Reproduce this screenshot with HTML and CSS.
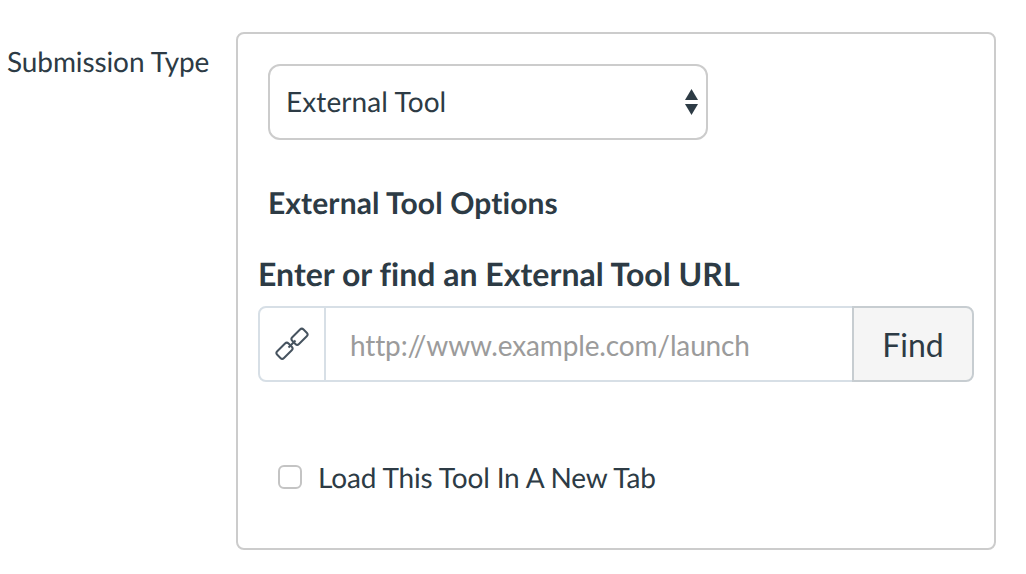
FILE: index.html
```html
<!DOCTYPE html>
<html lang="en">
<head>
    <meta charset="UTF-8">
    <meta name="viewport" content="width=device-width, initial-scale=1.0">
    <title>Submission Type</title>
    <link rel="stylesheet" href="styles.css">
</head>
<body>
    <div class="form-row">
        <label class="row-label" for="submissionType">Submission Type</label>
        <div class="panel">
            <div class="select-box" id="submissionType">
                <span>External Tool</span>
                <svg class="select-arrows" width="13" height="26" viewBox="0 0 13 26">
                    <path d="M6.500 0L13 11H0Z"/>
                    <path d="M0 15H13L6.500 26Z"/>
                </svg>
            </div>
            <h4 class="options-title">External Tool Opt&zwnj;ions</h4>
            <div class="tool-url">
                <h3 class="url-title">Enter or find an External Tool URL</h3>
                <div class="input-group">
                    <span class="input-icon">
                        <svg width="34" height="34" viewBox="0 0 34 34" fill="none" stroke="#46535f" stroke-width="2">
                            <rect x="16.500" y="5" width="16" height="9.500" rx="2.500" transform="rotate(-45 24.500 9.750)"/>
                            <rect x="1.500" y="19" width="16" height="9.500" rx="2.500" transform="rotate(-45 9.500 23.750)"/>
                            <path d="M13.500 20.500L20.500 13.500"/>
                        </svg>
                    </span>
                    <input class="url-input" type="text" placeholder="http://www.example.com/launch">
                    <button class="find-btn" type="button">Find</button>
                </div>
            </div>
            <label class="new-tab">
                <input class="new-tab-check" type="checkbox">
                <span>Load This Tool In A New Tab</span>
            </label>
        </div>
    </div>
</body>
</html>
```

FILE: styles.css
```css
* {
    margin: 0;
    padding: 0;
    box-sizing: border-box;
}
body {
    font-family: 'Lato', sans-serif;
    font-size: 28px;
    color: #2d3b45;
    background: #fff;
    text-rendering: geometricPrecision;
}
.form-row {
    display: flex;
    align-items: flex-start;
    gap: 26px;
    padding: 32px 0 0 7px;
}
.row-label {
    width: 203px;
    padding-top: 12px;
    line-height: 34px;
    white-space: nowrap;
    letter-spacing: -0.1px;
}
.panel {
    width: 760px;
    height: 518px;
    padding: 30px 20px 0 20px;
    border: 2px solid #ccc;
    border-radius: 8px;
}
.select-box {
    display: flex;
    justify-content: space-between;
    align-items: center;
    width: 440px;
    height: 76px;
    margin-left: 10px;
    padding: 0 8px 0 17px;
    border: 2px solid #ccc;
    border-radius: 12px;
}
.select-box span {
    margin: -2px 0 0 -1px;
    letter-spacing: 0.1px;
}
.select-arrows {
    fill: #2d3b45;
}
.options-title {
    margin: 45px 0 0 10px;
    font-size: 30px;
    line-height: 36px;
    font-weight: 700;
    letter-spacing: 0.1px;
}
.url-title {
    margin-top: 35px;
    font-size: 32px;
    line-height: 36px;
    font-weight: 700;
    letter-spacing: 0.03px;
}
.input-group {
    display: flex;
    width: 716px;
    height: 76px;
    margin-top: 14px;
}
.input-icon {
    display: flex;
    justify-content: center;
    align-items: center;
    width: 68px;
    border: 2px solid #d7dfe6;
    border-radius: 8px 0 0 8px;
}
.url-input {
    flex: 1;
    min-width: 0;
    padding: 2px 24px 0;
    font-family: inherit;
    font-size: 28px;
    letter-spacing: -0.14px;
    color: #2d3b45;
    border: solid #d7dfe6;
    border-width: 2px 0;
    outline: none;
}
.url-input::placeholder {
    color: #9b9b9b;
    opacity: 1;
}
.find-btn {
    width: 122px;
    font-family: inherit;
    font-size: 32px;
    color: #2d3b45;
    background: #f5f5f5;
    border: 2px solid #c7cdd1;
    border-radius: 0 8px 8px 0;
}
.new-tab {
    display: flex;
    align-items: center;
    gap: 16px;
    margin: 78px 0 0 20px;
    line-height: 34px;
    letter-spacing: -0.15px;
}
.new-tab-check {
    appearance: none;
    width: 24px;
    height: 24px;
    background: #fff;
    border: 2px solid #c4c4c4;
    border-radius: 6px;
}
```
